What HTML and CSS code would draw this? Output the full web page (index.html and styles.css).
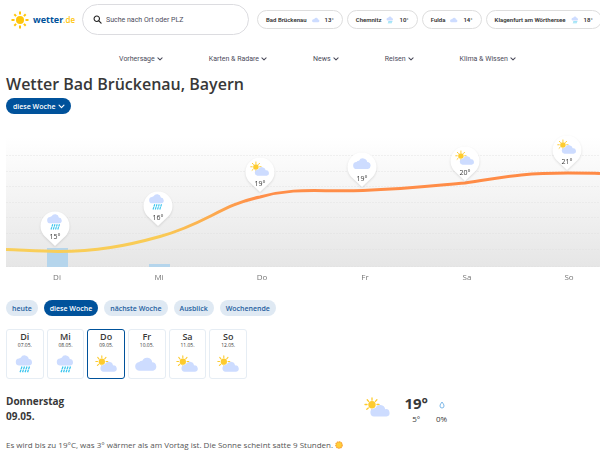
FILE: index.html
```html
<!DOCTYPE html>
<html lang="de">
<head>
  <meta charset="UTF-8" />
  <meta name="viewport" content="width=device-width, initial-scale=1.0" />
  <title>Wetter Bad Brückenau, Bayern</title>
  <link rel="stylesheet" href="styles.css">
</head>
<body>
  <svg class="sprite" aria-hidden="true">
    <symbol id="cloud" viewBox="0 0 24 16">
      <path d="M5 15a4.500 4.500 0 0 1-.6-9 4 4 0 0 1 3.200-1.400A5.500 5.500 0 0 1 18 6.200a4.500 4.500 0 0 1 1 8.800z" fill="#cddcff" />
    </symbol>
    <symbol id="rain" viewBox="0 0 18 20">
      <path d="M4 11.500a3.500 3.500 0 0 1-.4-7 3 3 0 0 1 1.600-.8A4.300 4.300 0 0 1 13.300 5 3.300 3.300 0 0 1 14 11.500z" fill="#cddcff" />
      <path d="M6.500 12.500l-2 6M9 12.500l-2 6M11.500 12.500l-2 6M14 12.500l-2 6" stroke="#3cc5ee" stroke-width="1.300" stroke-dasharray="2.800 .5" />
    </symbol>
    <symbol id="suncloud" viewBox="0 0 27 21">
      <g stroke="#fdcb2e" stroke-width="1.300" stroke-linecap="round">
        <path d="M8 1v2.200M3.200 2.800l1.400 1.600M1 7.500h2M2.800 12.200l1.500-1.300M12.900 2.800l-1.500 1.600M15 7.500h-2M8 14v-1.500" />
      </g>
      <circle cx="8" cy="7.800" r="3.700" fill="#fdcb2e" />
      <path d="M10 19.500a4 4 0 0 1-.4-7.900 3 3 0 0 1 1.800-.7 5.200 5.200 0 0 1 9.800 1.300 3.700 3.700 0 0 1 1.300 7.300z" fill="#cddcff" />
    </symbol>
    <symbol id="chevron" viewBox="0 0 10 10">
      <path d="M1.500 3l3.500 3.500L8.500 3" fill="none" stroke="currentColor" stroke-width="1.700" stroke-linecap="round" stroke-linejoin="round" />
    </symbol>
    <symbol id="pin" viewBox="0 0 30 36">
      <path d="M15 35L4.500 25A14.500 14.500 0 1 1 25.500 25z" fill="#fff" />
    </symbol>
  </svg>

  <header class="top">
    <a class="logo" href="#">
      <svg class="logo-sun" viewBox="0 0 18 18" aria-hidden="true">
        <circle cx="9" cy="9" r="4" fill="#ffc60b" />
        <path d="M9 .5v3M9 14.500v3M.5 9h3M14.500 9h3M3.300 3.300l1.800 1.800M12.900 12.900l1.800 1.800M3.300 14.700l1.800-1.800M12.900 5.100l1.800-1.800" stroke="#ffc60b" stroke-width="2" />
      </svg>
      <span class="logo-name">wetter<span class="logo-tld">.de</span></span>
    </a>
    <form class="search">
      <svg viewBox="0 0 10 10" aria-hidden="true">
        <circle cx="4.200" cy="4.200" r="3" fill="none" stroke="#222" stroke-width="1.200" />
        <path d="M6.500 6.500L9 9" stroke="#222" stroke-width="1.300" stroke-linecap="round" />
      </svg>
      <input type="text" placeholder="Suche nach Ort oder PLZ" aria-label="Suche nach Ort oder PLZ" />
    </form>
    <div class="places">
      <a class="place" href="#">Bad Brückenau <svg><use href="#cloud" /></svg> 13°</a>
      <a class="place" href="#">Chemnitz <svg><use href="#rain" /></svg> 10°</a>
      <a class="place" href="#">Fulda <svg><use href="#cloud" /></svg> 14°</a>
      <a class="place" href="#">Klagenfurt am Wörthersee <svg><use href="#rain" /></svg> 18°</a>
    </div>
  </header>

  <nav class="menu">
    <button type="button">Vorhersage <svg><use href="#chevron" /></svg></button>
    <button type="button">Karten &amp; Radare <svg><use href="#chevron" /></svg></button>
    <button type="button">News <svg><use href="#chevron" /></svg></button>
    <button type="button">Reisen <svg><use href="#chevron" /></svg></button>
    <button type="button">Klima &amp; Wissen <svg><use href="#chevron" /></svg></button>
  </nav>

  <main>
    <h1>Wetter Bad Brückenau, Bayern</h1>
    <div class="range">
      <select aria-label="Zeitraum">
        <option>diese Woche</option>
      </select>
      <svg aria-hidden="true"><use href="#chevron" /></svg>
    </div>

    <svg class="chart" viewBox="0 0 594 154" role="img" aria-label="Temperaturverlauf der Woche">
      <defs>
        <linearGradient id="back" x1="0" y1="0" x2="0" y2="1">
          <stop offset="0.050" stop-color="#fff" />
          <stop offset="1" stop-color="#e6e6e6" />
        </linearGradient>
        <linearGradient id="heat" gradientUnits="userSpaceOnUse" x1="0" y1="0" x2="594" y2="0">
          <stop offset="0" stop-color="#f9cf5a" />
          <stop offset=".26" stop-color="#f9cb55" />
          <stop offset=".42" stop-color="#ff8f4a" />
          <stop offset="1" stop-color="#ff8a45" />
        </linearGradient>
      </defs>
      <rect x="0" y="0" width="594" height="137" fill="url(#back)" />
      <path class="grid" d="M0 25.500H594M0 41.500H594M0 56.500H594M0 72.500H594M0 87.500H594M0 103.500H594M0 119.500H594M0 136.500H594" />
      <rect class="bar" x="41" y="118" width="21" height="19" />
      <rect class="bar" x="143" y="134" width="21" height="3" />
      <path class="line" stroke="url(#heat)" d="M0 119.500C16 120 33 121.500 52 121.500C90 121.500 120 116 154 106.500C200 94 215 75 254 67C290 57 310 62 357 60.500C400 59 425 56 459 53C495 48 510 43 562 43C575 43 585 43 594 43.500" />
      <g class="pins">
        <use href="#pin" x="34" y="81" width="30" height="36" />
        <use href="#pin" x="137" y="61" width="30" height="36" />
        <use href="#pin" x="239" y="27" width="30" height="36" />
        <use href="#pin" x="341" y="22" width="30" height="36" />
        <use href="#pin" x="444" y="16" width="30" height="36" />
        <use href="#pin" x="546" y="5" width="30" height="36" />
      </g>
      <use href="#rain" x="40" y="83" width="18" height="18" />
      <use href="#rain" x="142" y="63" width="18" height="18" />
      <use href="#suncloud" x="244" y="31" width="20" height="16" />
      <use href="#cloud" x="347" y="27" width="19" height="13" />
      <use href="#suncloud" x="449" y="20" width="20" height="16" />
      <use href="#suncloud" x="551" y="9" width="20" height="16" />
      <g class="temps">
        <text x="49" y="109">15°</text>
        <text x="152" y="90">16°</text>
        <text x="254" y="56">19°</text>
        <text x="356" y="51">19°</text>
        <text x="459" y="45">20°</text>
        <text x="561" y="34">21°</text>
      </g>
      <g class="days">
        <text x="51" y="150">Di</text>
        <text x="153" y="150">Mi</text>
        <text x="256" y="150">Do</text>
        <text x="359" y="150">Fr</text>
        <text x="461" y="150">Sa</text>
        <text x="563" y="150">So</text>
      </g>
    </svg>

    <div class="tabs">
      <button type="button">heute</button>
      <button type="button" class="active">diese Woche</button>
      <button type="button">nächste Woche</button>
      <button type="button">Ausblick</button>
      <button type="button">Wochenende</button>
    </div>

    <div class="cards">
      <button type="button"><b>Di</b><small>07.05.</small><svg><use href="#rain" /></svg></button>
      <button type="button"><b>Mi</b><small>08.05.</small><svg><use href="#rain" /></svg></button>
      <button type="button" class="active"><b>Do</b><small>09.05.</small><svg><use href="#suncloud" /></svg></button>
      <button type="button"><b>Fr</b><small>10.05.</small><svg><use href="#cloud" /></svg></button>
      <button type="button"><b>Sa</b><small>11.05.</small><svg><use href="#suncloud" /></svg></button>
      <button type="button"><b>So</b><small>12.05.</small><svg><use href="#suncloud" /></svg></button>
    </div>

    <section class="day">
      <h2>Donnerstag<br />09.05.</h2>
      <div class="values">
        <svg class="day-icon"><use href="#suncloud" /></svg>
        <div class="temp">
          <strong>19°</strong>
          <span>5°</span>
        </div>
        <div class="drop">
          <svg viewBox="0 0 8 8" aria-hidden="true"><path d="M4 1C3 2.500 2 3.500 2 5a2 2 0 0 0 4 0C6 3.500 5 2.500 4 1z" fill="none" stroke="#7db8e8" /></svg>
          <span>0%</span>
        </div>
      </div>
    </section>

    <p class="summary">Es wird bis zu 19°C, was 3° wärmer als am Vortag ist. Die Sonne scheint satte 9 Stunden.
      <svg viewBox="0 0 8 8" aria-hidden="true"><circle cx="4" cy="4" r="3.200" fill="#ffcf3a" stroke="#f9a33a" stroke-width="1.300" stroke-dasharray="1.500 .6" /></svg>
    </p>
  </main>
</body>
</html>
```

FILE: styles.css
```css
* {
  box-sizing: border-box;
}
body {
  font-family: "Open Sans", sans-serif;
  margin: 0;
  background-color: #fff;
  color: #383838;
  overflow-x: hidden;
}
button, input, select {
  font-family: inherit;
  margin: 0;
  padding: 0;
  border: none;
  background: none;
}
button {
  cursor: pointer;
}
.sprite {
  display: none;
}
.top {
  display: flex;
  align-items: center;
  padding: 4px 0 4px 11px;
  overflow: hidden;
  font-family: Roboto, sans-serif;
}
.logo {
  display: flex;
  align-items: center;
  gap: 4px;
  width: 71px;
  flex: none;
  text-decoration: none;
}
.logo-sun {
  width: 18px;
  height: 18px;
}
.logo-name {
  font-family: "Open Sans", sans-serif;
  font-size: 9px;
  font-weight: bold;
  color: #00529b;
}
.logo-tld {
  font-size: 8px;
  font-weight: 600;
  color: #ffc60b;
}
.search {
  display: flex;
  align-items: center;
  gap: 4px;
  flex: none;
  width: 167px;
  height: 31px;
  padding: 0 10px;
  border: 1px solid #dcdce0;
  border-radius: 16px;
}
.search svg {
  width: 9px;
  height: 9px;
  flex: none;
}
.search input {
  width: 100%;
  font-size: 7px;
  color: #4b4b5a;
}
.search input::placeholder {
  color: #4b4b5a;
}
.places {
  display: flex;
  gap: 4px;
  margin-left: 8px;
}
.place {
  display: flex;
  align-items: center;
  gap: 5px;
  height: 19px;
  padding: 0 8px;
  border: 1px solid #dedede;
  border-radius: 10px;
  font-size: 6px;
  font-weight: 600;
  color: #333;
  white-space: nowrap;
  text-decoration: none;
}
.place svg {
  width: 8px;
  height: 8px;
}
.menu {
  display: flex;
  justify-content: center;
  gap: 46px;
  padding: 14px 0 0 35px;
  font-family: Roboto, sans-serif;
}
.menu button {
  display: flex;
  align-items: center;
  gap: 2px;
  font-size: 7px;
  line-height: 12px;
  color: #4b4b5a;
}
.menu svg {
  width: 6px;
  height: 6px;
}
main {
  padding-left: 6px;
}
h1 {
  margin: 9px 0 3px;
  font-size: 16px;
  line-height: 21px;
  font-weight: 600;
}
.range {
  position: relative;
  width: 65px;
  color: #fff;
}
.range select {
  display: block;
  width: 100%;
  height: 16px;
  padding: 0 7px;
  appearance: none;
  border-radius: 8px;
  background-color: #00529b;
  color: #fff;
  font-size: 7px;
  font-weight: 600;
}
.range svg {
  position: absolute;
  right: 6px;
  top: 5px;
  width: 7px;
  height: 7px;
  pointer-events: none;
}
.chart {
  display: block;
  width: 100%;
  margin-top: 16px;
}
.grid {
  fill: none;
  stroke: #dedede;
  stroke-width: 1;
  stroke-dasharray: 2 1;
  opacity: 0.4;
}
.bar {
  fill: #b5d5ec;
}
.line {
  fill: none;
  stroke-width: 3;
}
.pins {
  filter: drop-shadow(0 1px 1px rgba(0,0,0,0.12));
}
.temps text {
  font-size: 7px;
  fill: #383838;
  text-anchor: middle;
}
.days text {
  font-size: 8px;
  fill: #777;
  text-anchor: middle;
}
.tabs {
  display: flex;
  gap: 6px;
  margin-top: 16px;
}
.tabs button {
  height: 16px;
  padding: 0 6px;
  border-radius: 8px;
  background-color: #dfe9f3;
  color: #1f5f9f;
  font-size: 7px;
  font-weight: 600;
  white-space: nowrap;
}
.tabs .active {
  background-color: #00529b;
  color: #fff;
}
.cards {
  display: grid;
  grid-template-columns: repeat(6, 1fr);
  gap: 3px;
  max-width: 241px;
  margin-top: 13px;
}
.cards button {
  display: flex;
  flex-direction: column;
  align-items: center;
  height: 50px;
  padding-top: 2px;
  border: 1px solid #e6edf4;
  border-radius: 3px;
  color: #383838;
}
.cards .active {
  border-color: #00529b;
}
.cards b {
  font-size: 9px;
  line-height: 10px;
  font-weight: 600;
}
.cards small {
  font-size: 5px;
  line-height: 6px;
}
.cards svg {
  width: 23px;
  height: 20px;
  margin-top: 6px;
}
.day {
  display: flex;
  margin-top: 15px;
}
h2 {
  flex: 0 0 60%;
  margin: 0;
  font-size: 10px;
  line-height: 15px;
  font-weight: bold;
}
.values {
  display: flex;
}
.day-icon {
  width: 27px;
  height: 21px;
  margin: 3px 0 0 2px;
}
.temp, .drop {
  display: flex;
  flex-direction: column;
  align-items: center;
  font-size: 8px;
  line-height: 12px;
}
.temp {
  margin-left: 13px;
}
.temp strong {
  font-size: 15px;
  line-height: 19px;
}
.drop {
  margin-left: 8px;
}
.drop svg {
  width: 8px;
  height: 8px;
  margin: 7px 0 4px;
}
.summary {
  display: flex;
  align-items: center;
  gap: 2px;
  margin: 12px 0;
  font-size: 8px;
  line-height: 16px;
  color: #555;
}
.summary svg {
  width: 8px;
  height: 8px;
}
```
